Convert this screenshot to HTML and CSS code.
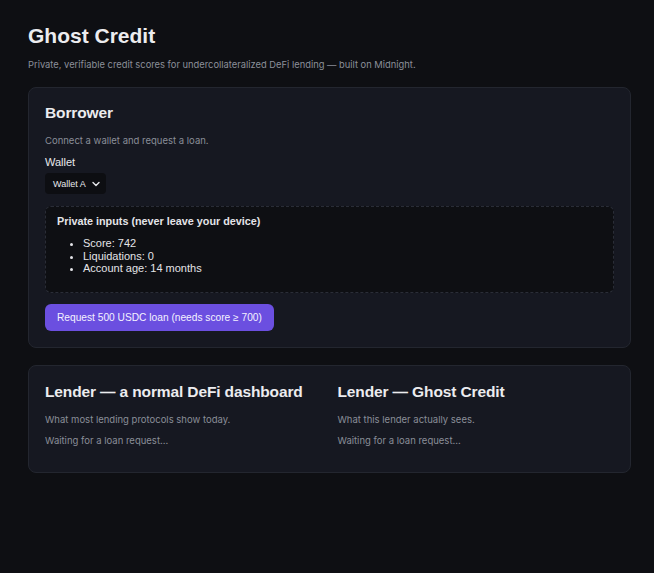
FILE: index.html
```html
<!DOCTYPE html>
<html lang="en">
<head>
<meta charset="utf-8">
<title>Ghost Credit</title>
<link rel="stylesheet" href="styles.css">
</head>
<body>
<main class="page">
  <h1 class="title">Ghost Credit</h1>
  <p class="subtitle">Private, verifiable credit scores for undercollateralized DeFi lending — built on Midnight.</p>

  <section class="card">
    <h2 class="card-title">Borrower</h2>
    <p class="muted intro">Connect a wallet and request a loan.</p>
    <label class="label" for="wallet">Wallet</label>
    <div class="select" id="wallet">
      <span>Wallet A</span>
      <svg class="chev" width="8" height="6" viewBox="0 0 8 6"><path d="M1 1.5 L4 4.5 L7 1.5" fill="none" stroke="#e6e6ea" stroke-width="1.4" stroke-linecap="round" stroke-linejoin="round"/></svg>
    </div>
    <div class="private">
      <h3 class="private-title">Private inputs (never leave your device)</h3>
      <ul class="private-list">
        <li>Score: 742</li>
        <li>Liquidations: 0</li>
        <li>Account age: 14 months</li>
      </ul>
    </div>
    <button class="btn" type="button">Request 500 USDC loan (needs score ≥ 700)</button>
  </section>

  <section class="card lenders">
    <div class="col">
      <h2 class="card-title">Lender — a normal DeFi dashboard</h2>
      <p class="muted">What most lending protocols show today.</p>
      <p class="muted">Waiting for a loan request...</p>
    </div>
    <div class="col">
      <h2 class="card-title">Lender — Ghost Credit</h2>
      <p class="muted">What this lender actually sees.</p>
      <p class="muted">Waiting for a loan request...</p>
    </div>
  </section>
</main>
</body>
</html>
```

FILE: styles.css
```css
* { box-sizing: border-box; }
html, body { margin: 0; padding: 0; background: #0e0f13; }
body {
  font-family: "Liberation Sans", Arial, sans-serif;
  color: #e8e8ec;
}
.page {
  width: 603px;
  margin-left: 28px;
  padding-top: 23px;
}
.title {
  margin: 0;
  font-size: 21px;
  line-height: 26px;
  font-weight: 700;
  color: #ececef;
}
.subtitle {
  margin: 9px 0 15px;
  font-family: Inter, "Liberation Sans", sans-serif;
  font-size: 9.35px;
  line-height: 14px;
  color: #8c909a;
}
.card {
  background: #161821;
  border: 1px solid #23262f;
  border-radius: 8px;
  padding: 15px 16px 16px;
  margin-bottom: 17px;
}
.card-title {
  margin: 0;
  font-size: 15.5px;
  line-height: 20px;
  font-weight: 700;
  letter-spacing: -0.13px;
  color: #ececef;
}
.muted {
  margin: 0;
  font-family: Inter, "Liberation Sans", sans-serif;
  font-size: 9.5px;
  line-height: 14px;
  color: #8a8e98;
}
.intro { margin-top: 11px; }
.label {
  display: block;
  margin-top: 7px;
  font-size: 11px;
  line-height: 14px;
  color: #e8e8ec;
}
.select {
  display: inline-flex;
  align-items: center;
  gap: 6px;
  margin-top: 4px;
  height: 21px;
  padding: 0 6px 0 8px;
  background: #0d0e12;
  border-radius: 4px;
  font-size: 9px;
  color: #e8e8ec;
}
.private {
  margin-top: 12px;
  background: #0e0f13;
  border: 1px dashed #2a2d37;
  border-radius: 6px;
  padding: 7px 11px 17px;
}
.private-title {
  margin: 0;
  font-size: 10.8px;
  line-height: 14px;
  font-weight: 700;
  color: #e4e4e8;
}
.private-list {
  margin: 9px 0 0;
  padding-left: 26px;
  font-size: 11px;
  line-height: 12.5px;
  color: #e4e4e8;
}
.btn {
  display: block;
  margin-top: 11px;
  height: 27px;
  padding: 0 12px;
  border: 0;
  border-radius: 6px;
  background: #6b4fe0;
  color: #f4f2ff;
  font-family: "Liberation Sans", Arial, sans-serif;
  font-size: 10.2px;
}
.lenders {
  display: grid;
  grid-template-columns: 1fr 1fr;
  column-gap: 16px;
  padding-top: 16px;
  padding-bottom: 24px;
}
.lenders .muted { margin-top: 7px; }
.lenders .card-title + .muted { margin-top: 11px; }
```
